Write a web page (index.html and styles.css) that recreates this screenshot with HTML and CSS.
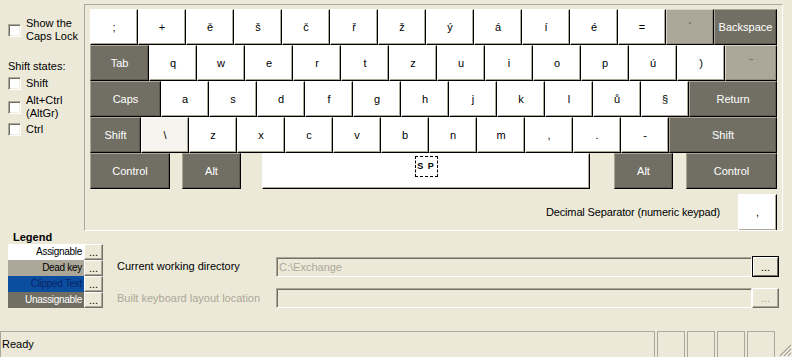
FILE: index.html
```html
<!DOCTYPE html>
<html>
<head>
    <title>Keyboard Layout Creator</title>
    <link rel="stylesheet" href="styles.css">
</head>
<body>
    <div class="top">
        <div class="side">
            <label class="check two"><span class="box"></span><span>Show the<br>Caps Lock</span></label>
            <div class="side-title">Shift states:</div>
            <label class="check shift"><span class="box"></span><span>Shift</span></label>
            <label class="check two altgr"><span class="box"></span><span>Alt+Ctrl<br>(AltGr)</span></label>
            <label class="check ctrl"><span class="box"></span><span>Ctrl</span></label>
        </div>

        <div class="panel">
            <div class="row">
                <div class="key">;</div>
                <div class="key">+</div>
                <div class="key">ě</div>
                <div class="key">š</div>
                <div class="key">č</div>
                <div class="key">ř</div>
                <div class="key">ž</div>
                <div class="key">ý</div>
                <div class="key">á</div>
                <div class="key">í</div>
                <div class="key">é</div>
                <div class="key">=</div>
                <div class="key dead">´</div>
                <div class="key fixed w-back">Backspace</div>
            </div>
            <div class="row">
                <div class="key fixed w-tab">Tab</div>
                <div class="key">q</div>
                <div class="key">w</div>
                <div class="key">e</div>
                <div class="key">r</div>
                <div class="key">t</div>
                <div class="key">z</div>
                <div class="key">u</div>
                <div class="key">i</div>
                <div class="key">o</div>
                <div class="key">p</div>
                <div class="key">ú</div>
                <div class="key">)</div>
                <div class="key dead w-uml">¨</div>
            </div>
            <div class="row">
                <div class="key fixed w-caps">Caps</div>
                <div class="key">a</div>
                <div class="key">s</div>
                <div class="key">d</div>
                <div class="key">f</div>
                <div class="key">g</div>
                <div class="key">h</div>
                <div class="key">j</div>
                <div class="key">k</div>
                <div class="key">l</div>
                <div class="key">ů</div>
                <div class="key">§</div>
                <div class="key fixed w-return">Return</div>
            </div>
            <div class="row">
                <div class="key fixed w-lshift">Shift</div>
                <div class="key oem">\</div>
                <div class="key">z</div>
                <div class="key">x</div>
                <div class="key">c</div>
                <div class="key">v</div>
                <div class="key">b</div>
                <div class="key">n</div>
                <div class="key">m</div>
                <div class="key">,</div>
                <div class="key">.</div>
                <div class="key">-</div>
                <div class="key fixed w-rshift">Shift</div>
            </div>
            <div class="row">
                <div class="key fixed w-lctrl">Control</div>
                <div class="key fixed w-lalt">Alt</div>
                <div class="key space"><span class="sp">S P</span></div>
                <div class="key fixed w-ralt">Alt</div>
                <div class="key fixed w-rctrl">Control</div>
            </div>
            <div class="decimal-row">
                <span>Decimal Separator (numeric keypad)</span>
                <div class="key decimal">,</div>
            </div>
        </div>
    </div>

    <div class="bottom">
        <div class="legend">
            <div class="legend-title">Legend</div>
            <div class="legend-row"><span class="swatch assignable">Assignable</span><span class="btn dots">...</span></div>
            <div class="legend-row"><span class="swatch deadkey">Dead key</span><span class="btn dots">...</span></div>
            <div class="legend-row"><span class="swatch clipped">Clipped Text</span><span class="btn dots">...</span></div>
            <div class="legend-row"><span class="swatch unassignable">Unassignable</span><span class="btn dots">...</span></div>
        </div>

        <div class="fields">
            <div class="field-row">
                <span class="field-label">Current working directory</span>
                <div class="input">C:\Exchange</div>
                <span class="btn browse default">...</span>
            </div>
            <div class="field-row second">
                <span class="field-label disabled">Built keyboard layout location</span>
                <div class="input"></div>
                <span class="btn browse disabled">...</span>
            </div>
        </div>
    </div>

    <div class="status">
        <div class="pane main-pane">Ready</div>
        <div class="pane"></div>
        <div class="pane"></div>
        <div class="pane"></div>
        <div class="pane"></div>
        <svg class="grip" width="13" height="13" viewBox="0 0 13 13">
            <path d="M12 1 L1 12 M12 5 L5 12 M12 9 L9 12" stroke="#aca899" stroke-width="1.4"/>
            <path d="M13 2 L2 13 M13 6 L6 13 M13 10 L10 13" stroke="#fff" stroke-width="1"/>
        </svg>
    </div>
</body>
</html>
```

FILE: styles.css
```css
* {
    margin: 0;
    padding: 0;
    box-sizing: border-box;
}
body {
    width: 792px;
    height: 357px;
    overflow: hidden;
    background: #ece9d8;
    color: #000;
    font-family: "Liberation Sans", Arial, sans-serif;
    font-size: 11px;
    line-height: 13px;
}

/* top part: options + keyboard */
.top {
    display: flex;
    height: 231px;
}
.side {
    width: 84px;
    padding-left: 8px;
    display: flex;
    flex-direction: column;
}
.check {
    display: flex;
    align-items: center;
    gap: 5px;
    height: 13px;
    margin-top: 4px;
}
.check.two {
    height: 26px;
    margin-top: 17px;
}
.check.altgr {
    margin-top: 4px;
}
.check.ctrl {
    margin-top: 3px;
}
.box {
    flex: none;
    width: 13px;
    height: 13px;
    background: #fff;
    border: 1px solid;
    border-color: #aca899 #fff #fff #aca899;
    box-shadow: inset 1px 1px 0 #716f64, inset -1px -1px 0 #f1efe2;
}
.side-title {
    margin-top: 17px;
    height: 13px;
}

.panel {
    width: 699px;
    height: 227px;
    margin-top: 4px;
    padding: 4px 0 0 5px;
    border: 1px solid;
    border-color: #aca899 #fff #fff #aca899;
    overflow: hidden;
}
.row {
    display: flex;
    width: 687px;
    height: 36px;
}
.key {
    flex: none;
    width: 48px;
    height: 36px;
    display: flex;
    align-items: center;
    justify-content: center;
    background: #fff;
    border: 1px solid;
    border-color: #fff #000 #000 #fff;
    box-shadow: inset -1px -1px 0 #aca899;
}
.key.dead {
    background: #aca899;
    color: #333;
    border-color: #d8d5c8 #000 #000 #d8d5c8;
    box-shadow: inset -1px -1px 0 #8e8b7e;
}
.key.fixed {
    background: #716f64;
    color: #fff;
    border-color: #aca899 #000 #000 #aca899;
    box-shadow: inset -1px -1px 0 #5a584f;
}
.key.oem {
    background: #f5f4ef;
}
.w-back { width: 63px; }
.w-tab { width: 59px; }
.w-uml { width: 52px; }
.w-caps { width: 71px; }
.w-return { width: 88px; }
.w-lshift { width: 51px; }
.w-rshift { width: 108px; }
.w-lctrl { width: 80px; }
.w-lalt { width: 59px; margin-left: 12px; }
.w-ralt { width: 59px; margin-left: 24px; }
.w-rctrl { width: 91px; margin-left: 13px; }
.key.space {
    width: 328px;
    margin-left: 21px;
    align-items: flex-start;
    padding-top: 2px;
}
.sp {
    width: 23px;
    height: 21px;
    border: 1px dashed #000;
    font-size: 9px;
    font-weight: bold;
    line-height: 19px;
    letter-spacing: 1px;
    text-align: center;
    white-space: nowrap;
}
.decimal-row {
    display: flex;
    justify-content: flex-end;
    align-items: center;
    gap: 18px;
    width: 687px;
    margin-top: 5px;
    letter-spacing: -0.15px;
}
.key.decimal {
    width: 39px;
    height: 37px;
}

/* legend + paths */
.bottom {
    display: flex;
    height: 100px;
}
.legend {
    width: 103px;
    padding-left: 8px;
}
.legend-title {
    height: 13px;
    padding-left: 5px;
    font-weight: bold;
}
.legend-row {
    display: flex;
    height: 16px;
}
.swatch {
    width: 76px;
    padding-right: 2px;
    text-align: right;
    font-size: 10px;
    letter-spacing: -0.3px;
    line-height: 16px;
}
.assignable { background: #fff; }
.deadkey { background: #aca899; }
.clipped { background: #0b4ea0; color: #0a2464; }
.unassignable { background: #716f64; color: #fff; }
.btn {
    display: flex;
    align-items: center;
    justify-content: center;
    background: #ece9d8;
    border: 1px solid;
    border-color: #fff #716f64 #716f64 #fff;
    box-shadow: inset -1px -1px 0 #aca899;
    font-size: 11px;
    line-height: 10px;
}
.dots {
    width: 19px;
    height: 16px;
}
.fields {
    margin-left: 14px;
    padding-top: 25px;
}
.field-row {
    display: flex;
    align-items: center;
    height: 21px;
}
.field-row.second {
    margin-top: 11px;
    height: 20px;
}
.field-label {
    width: 159px;
}
.disabled {
    color: #aca899;
}
.input {
    width: 476px;
    height: 20px;
    padding-left: 2px;
    line-height: 18px;
    color: #aca899;
    border: 1px solid;
    border-color: #aca899 #fff #fff #aca899;
    box-shadow: inset 1px 1px 0 #716f64;
}
.field-row:first-child .input {
    margin-top: 1px;
}
.browse {
    width: 27px;
    height: 21px;
}
.browse.default {
    border-color: #000;
    box-shadow: inset 1px 1px 0 #fff, inset -1px -1px 0 #716f64;
}
.second .browse {
    height: 20px;
}

/* status bar */
.status {
    display: flex;
    align-items: stretch;
    gap: 2px;
    height: 26px;
}
.pane {
    width: 28px;
    border: 1px solid #aca899;
    border-bottom: none;
}
.main-pane {
    width: 655px;
    padding: 6px 0 0 1px;
}
.grip {
    align-self: flex-end;
    margin-left: 2px;
}
```
